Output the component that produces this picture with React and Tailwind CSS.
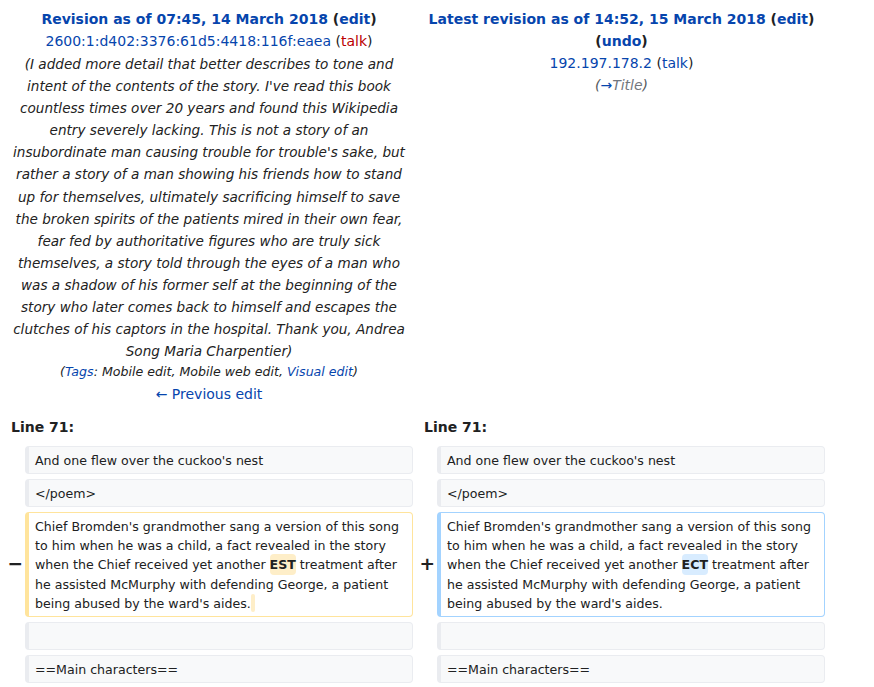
const font = { fontFamily: '"DejaVu Sans", sans-serif' }

function Box({ kind = 'context', children }) {
  const styles = {
    context: 'bg-[#f8f9fa] border-[#eaecf0]',
    deleted: 'bg-white border-[#ffe49c]',
    added: 'bg-white border-[#a3d3ff]',
  }
  return (
    <div
      className={`min-h-[28px] rounded-[4px] border border-l-4 px-[6px] pt-[3.8px] pb-[3px] text-[12.6px] leading-[19.2px] text-[#202122] whitespace-pre-wrap ${styles[kind]}`}
    >
      {children}
    </div>
  )
}

function Change({ color, children }) {
  return <span className={`rounded-[4px] py-[3px] font-bold ${color}`}>{children}</span>
}

function Marker({ children }) {
  return (
    <div className="-mr-[3px] flex items-center justify-end text-[18.5px] font-bold text-[#202122] leading-none">
      {children}
    </div>
  )
}

function Row({ left, right }) {
  return (
    <>
      <div></div>
      {left}
      <div></div>
      {right}
    </>
  )
}

export default function App() {
  const context = [
    "And one flew over the cuckoo's nest",
    '</poem>',
  ]

  return (
    <div className="min-h-screen bg-white" style={font}>
      <div className="grid w-[830px] grid-cols-[15px_388px_14px_388px] gap-[5px] px-[5px] pt-[8px] text-[#202122]">
        {/* old revision header */}
        <div className="col-span-2 pb-[6px] text-center text-[14px] leading-[22.06px]">
          <div className="font-bold">
            <a className="text-[#0645ad]">Revision as of 07:45, 14 March 2018</a> (
            <a className="text-[#0645ad]">edit</a>)
          </div>
          <div>
            <a className="text-[#0645ad]">2600:1:d402:3376:61d5:4418:116f:eaea</a> (
            <a className="text-[#ba0000]">talk</a>)
          </div>
          <div className="px-[7px] pt-[1px] text-[13.6px] italic text-[#222]">
            (I added more detail that better describes to tone and intent of the contents of the story. I've read
            this book countless times over 20 years and found this Wikipedia entry severely lacking. This is not a
            story of an insubordinate man causing trouble for trouble's sake, but rather a story of a man showing his
            friends how to stand up for themselves, ultimately sacrificing himself to save the broken spirits of the
            patients mired in their own fear, fear fed by authoritative figures who are truly sick themselves, a story
            told through the eyes of a man who was a shadow of his former self at the beginning of the story who later
            comes back to himself and escapes the clutches of his captors in the hospital. Thank you, Andrea Song Maria
            Charpentier)
          </div>
          <div className="-mt-[1px] text-[12.6px] italic text-[#222]">
            (<a className="text-[#0645ad]">Tags</a>: Mobile edit, Mobile web edit,{' '}
            <a className="text-[#0645ad]">Visual edit</a>)
          </div>
          <div>
            <a className="text-[#0645ad]">← Previous edit</a>
          </div>
        </div>

        {/* new revision header */}
        <div className="col-span-2 pb-[6px] text-center text-[14px] leading-[22.06px]">
          <div className="font-bold">
            <a className="text-[#0645ad]">Latest revision as of 14:52, 15 March 2018</a> (
            <a className="text-[#0645ad]">edit</a>)
          </div>
          <div className="font-bold">
            (<a className="text-[#0645ad]">undo</a>)
          </div>
          <div>
            <a className="text-[#0645ad]">192.197.178.2</a> (<a className="text-[#0645ad]">talk</a>)
          </div>
          <div className="italic text-[#54595d]">
            (<a className="text-[#0645ad]">→</a>
            <span className="text-[#72777d]">Title</span>)
          </div>
        </div>

        <div className="col-span-2 px-[6px] pb-[3px] text-[14px] font-bold leading-[22px]">Line 71:</div>
        <div className="col-span-2 px-[6px] pb-[3px] text-[14px] font-bold leading-[22px]">Line 71:</div>

        {context.map((line, i) => (
          <Row key={i} left={<Box>{line}</Box>} right={<Box>{line}</Box>} />
        ))}

        <Marker>−</Marker>
        <Box kind="deleted">
          Chief Bromden's grandmother sang a version of this song to him when he was a child, a fact revealed in the
          story when the Chief received yet another <Change color="bg-[#feeec8]">EST</Change> treatment after he
          assisted McMurphy with defending George, a patient being abused by the ward's aides.
          <span className="inline-block h-[18px] w-[4px] rounded-[2px] bg-[#feeec8] align-[-4px]"></span>
        </Box>
        <Marker>+</Marker>
        <Box kind="added">
          Chief Bromden's grandmother sang a version of this song to him when he was a child, a fact revealed in the
          story when the Chief received yet another <Change color="bg-[#d8ecff]">ECT</Change> treatment after he
          assisted McMurphy with defending George, a patient being abused by the ward's aides.
        </Box>

        <Row left={<Box>{''}</Box>} right={<Box>{''}</Box>} />
        <Row left={<Box>==Main characters==</Box>} right={<Box>==Main characters==</Box>} />
      </div>
    </div>
  )
}
